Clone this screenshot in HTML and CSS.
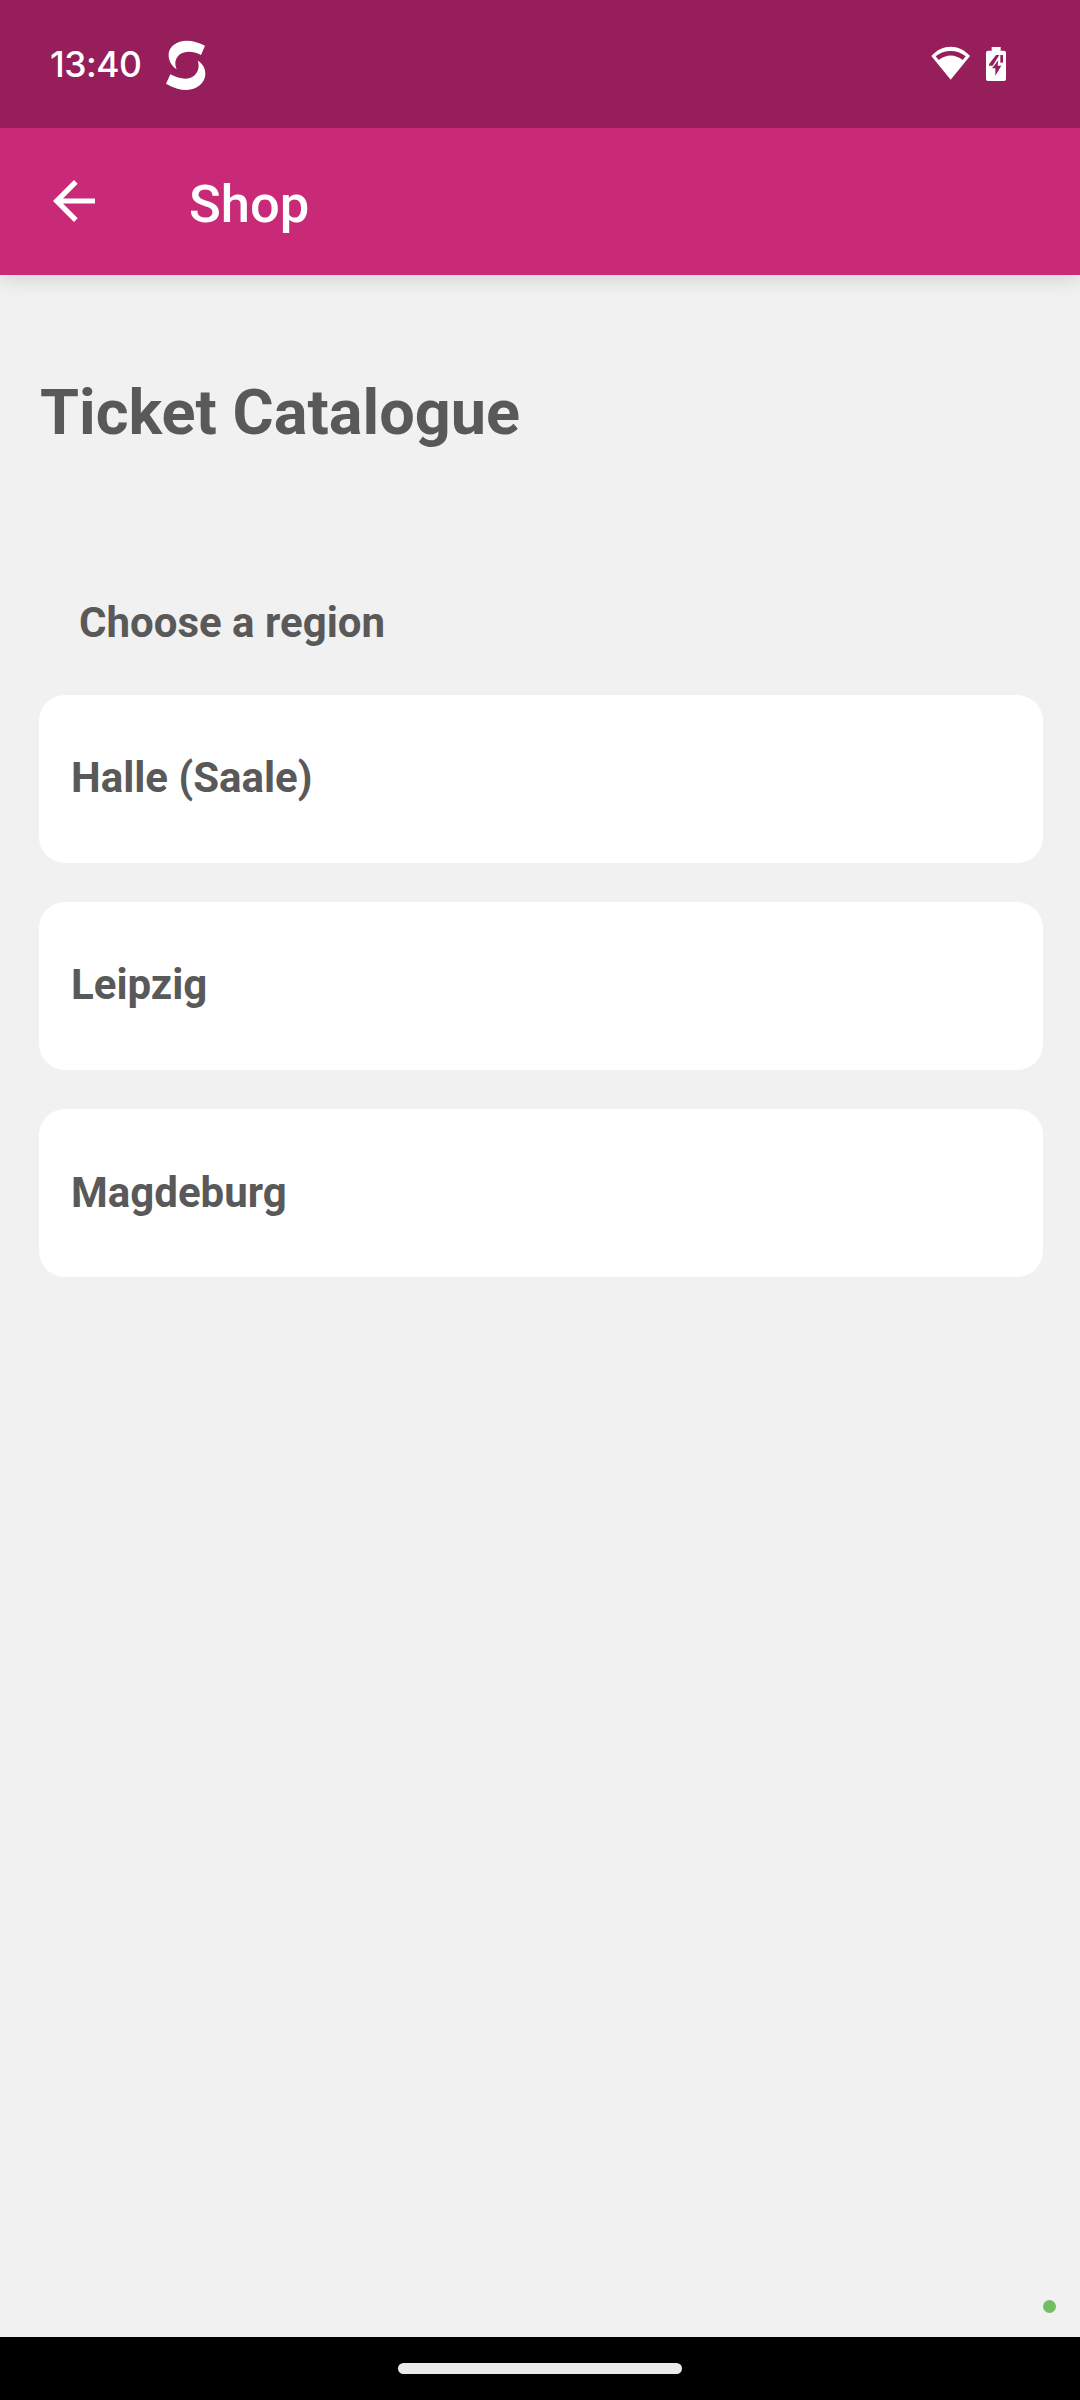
FILE: index.html
```
<!DOCTYPE html>
<html lang="en">
<head>
	<meta charset="UTF-8">
	<title>Shop</title>
	<link rel="stylesheet" href="styles.css">
</head>
<body>
<div class="screen">
	<div class="status">
		<span class="time">13:40</span>
		<svg class="logo" viewBox="405 60 123 150">
			<path d="M525 77L513 105C490 93 465 92 450 103C435 115 433 130 440 148C425 140 414 120 416 100C419 78 440 63 470 62C490 62 508 68 525 77Z"/>
			<path d="M421 163L408 191C430 204 450 210 470 210C500 209 524 192 526 163C527 145 518 130 503 122C510 140 504 158 490 169C474 182 445 176 421 163Z"/>
		</svg>
		<svg class="wifi" viewBox="60 45 123 108">
			<path d="M122 149L64 78C98 41 146 41 180 78Z"/>
			<path class="cut" d="M77 79C103 58 141 58 167 79L158 90C135 72 109 72 86 90Z"/>
		</svg>
		<svg class="battery" viewBox="228 51 60 102">
			<path d="M245 51H272V62H282Q288 62 288 68V147Q288 153 282 153H234Q228 153 228 147V68Q228 62 234 62H245Z"/>
			<path class="cut" d="M258 75H268L248 107H237V103Z"/>
			<path class="cut" d="M265 91L246 115H256V137L274 107H263Z"/>
			<path class="cut" d="M271 75H279V98H271Z"/>
		</svg>
	</div>
	<div class="header">
		<svg class="back" viewBox="0 0 42 42">
			<path d="M42 18.4V23.6H10L24.7 38.3L21 42L0 21L21 0L24.7 3.7L10 18.4Z"/>
		</svg>
		<span>Shop</span>
	</div>
	<div class="content">
		<h1>Ticket Catalogue</h1>
		<h2>Choose a region</h2>
		<ul>
			<li>Halle (Saale)</li>
			<li>Leipzig</li>
			<li>Magdeburg</li>
		</ul>
		<i class="dot"></i>
	</div>
	<div class="nav"><i></i></div>
</div>
</body>
</html>
```
FILE: styles.css
```
*{
	margin: 0;
	padding: 0;
	box-sizing: border-box;
}
body{
	font-family: Roboto, sans-serif;
	color: #595959;
	background: #f1f1f1;
}
ul{
	list-style: none;
}
svg{
	display: block;
	fill: #fff;
}
.screen{
	display: flex;
	flex-direction: column;
	width: 1080px;
	height: 2400px;
}
.status{
	position: relative;
	z-index: 1;
	display: flex;
	align-items: flex-start;
	height: 128px;
	padding: 40px 74px 0 50px;
	background: #961e5a;
}
.time{
	width: 115px;
	margin-top: 3px;
	font: 500 35.5px/44px Inter, sans-serif;
	letter-spacing: -.5px;
	color: #fff;
}
.logo{
	width: 41px;
	height: 50px;
}
.wifi{
	width: 41px;
	height: 36px;
	margin: 5px 15px 0 auto;
}
.battery{
	width: 20px;
	height: 34px;
	margin-top: 7px;
}
.cut{
	fill: #961e5a;
}
.header{
	display: flex;
	align-items: flex-start;
	height: 147px;
	padding-left: 53px;
	background: #c82a78;
	box-shadow: 0 4px 20px rgba(0,0,0,.13);
}
.back{
	width: 42px;
	height: 42px;
	margin: 52px 94px 0 0;
}
.header span{
	margin-top: 45px;
	font-size: 52.5px;
	font-weight: 500;
	line-height: 62px;
	color: #fff;
}
.content{
	position: relative;
	flex: 1;
	padding: 101px 37px 0 39px;
}
h1{
	padding-left: 1px;
	font-size: 63px;
	line-height: 74px;
}
h2{
	margin-top: 148px;
	padding-left: 40px;
	font-size: 42px;
	line-height: 50px;
}
ul{
	display: grid;
	gap: 39px;
	margin-top: 47px;
}
li{
	height: 168px;
	padding: 58px 32px 0;
	font-size: 42px;
	font-weight: 700;
	line-height: 50px;
	background: #fff;
	border-radius: 26px;
}
li:last-child{
	padding-top: 59px;
}
/* camera indicator */
.dot{
	position: absolute;
	right: 24px;
	bottom: 24px;
	width: 13px;
	height: 13px;
	background: #73bd62;
	border-radius: 50%;
}
.nav{
	height: 63px;
	padding-top: 26px;
	background: #000;
}
.nav i{
	display: block;
	width: 284px;
	height: 11px;
	margin: 0 auto;
	background: #ebebeb;
	border-radius: 6px;
}
```
